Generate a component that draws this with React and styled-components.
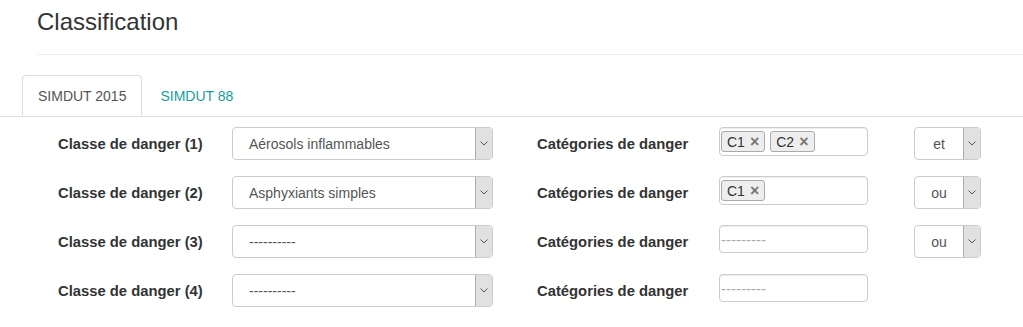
import React from "react";
import styled, { createGlobalStyle } from "styled-components";

const GlobalStyle = createGlobalStyle`
  body {
    margin: 0;
    background: #fff;
    font-family: "Liberation Sans", Arial, sans-serif;
    color: #333;
  }
`;

const rows = [
  { n: 1, value: "Aérosols inflammables", tags: ["C1", "C2"], op: "et" },
  { n: 2, value: "Asphyxiants simples", tags: ["C1"], op: "ou" },
  { n: 3, value: "----------", tags: [], op: "ou" },
  { n: 4, value: "----------", tags: [], op: null },
];

const Chevron = () => (
  <svg width="8" height="5" viewBox="0 0 8 5">
    <path d="M0.5 0.5 L4 4 L7.5 0.5" fill="none" stroke="#555" strokeWidth="1" />
  </svg>
);

const App = () => {
  return (
    <Page>
      <GlobalStyle />
      <Header>
        <Title>Classification</Title>
      </Header>
      <Tabs>
        <Tab active>SIMDUT 2015</Tab>
        <Tab>SIMDUT 88</Tab>
      </Tabs>
      <Form>
        {rows.map((row) => (
          <Row key={row.n}>
            <Label>Classe de danger ({row.n})</Label>
            <Select>
              <SelectValue>{row.value}</SelectValue>
              <Arrow>
                <Chevron />
              </Arrow>
            </Select>
            <Label>Catégories de danger</Label>
            <TagInput empty={row.tags.length === 0}>
              {row.tags.length > 0 ? (
                row.tags.map((t) => (
                  <Tag key={t}>
                    {t}
                    <Remove>×</Remove>
                  </Tag>
                ))
              ) : (
                <Placeholder>---------</Placeholder>
              )}
            </TagInput>
            {row.op ? (
              <SmallSelect>
                <SmallValue>{row.op}</SmallValue>
                <Arrow>
                  <Chevron />
                </Arrow>
              </SmallSelect>
            ) : (
              <span />
            )}
          </Row>
        ))}
      </Form>
    </Page>
  );
};

const Page = styled.div`
  width: 1023px;
  height: 327px;
  overflow: hidden;
`;

const Header = styled.div`
  margin-left: 37px;
  padding-top: 9px;
  padding-bottom: 19px;
  border-bottom: 1px solid #eee;
`;

const Title = styled.h3`
  margin: 0;
  font-size: 24px;
  font-weight: 400;
  line-height: 26px;
  color: #333;
`;

const Tabs = styled.div`
  display: flex;
  margin-top: 20px;
  padding-left: 22px;
  border-bottom: 1px solid #ddd;
  height: 41px;
`;

const Tab = styled.div`
  display: flex;
  align-items: center;
  padding: 0 15px;
  height: 41px;
  margin-bottom: -1px;
  font-size: 14px;
  color: ${(p) => (p.active ? "#555" : "#1a9c9c")};
  background: #fff;
  border: 1px solid ${(p) => (p.active ? "#ddd" : "transparent")};
  border-bottom-color: ${(p) => (p.active ? "#fff" : "transparent")};
  border-radius: 4px 4px 0 0;
  margin-right: 2px;
  box-sizing: border-box;
`;

const Form = styled.div`
  padding: 10px 0 0 58px;
  display: flex;
  flex-direction: column;
  gap: 16px;
`;

const Row = styled.div`
  display: grid;
  grid-template-columns: 174px 261px 44px 182px 149px 46px 67px;
  grid-template-areas: "l1 s1 . l2 t . o";
  align-items: center;
  height: 33px;

  & > :nth-child(1) { grid-area: l1; }
  & > :nth-child(2) { grid-area: s1; }
  & > :nth-child(3) { grid-area: l2; }
  & > :nth-child(4) { grid-area: t; }
  & > :nth-child(5) { grid-area: o; }
`;

const Label = styled.div`
  font-size: 14.8px;
  font-weight: 700;
  color: #333;
  white-space: nowrap;
`;

const Select = styled.div`
  display: flex;
  height: 33px;
  box-sizing: border-box;
  border: 1px solid #ccc;
  border-radius: 4px;
  overflow: hidden;
  background: #fff;
`;

const SelectValue = styled.div`
  flex: 1;
  display: flex;
  align-items: center;
  padding-left: 16px;
  font-size: 14px;
  color: #555;
`;

const SmallSelect = styled(Select)``;

const SmallValue = styled.div`
  flex: 1;
  display: flex;
  align-items: center;
  justify-content: center;
  font-size: 14px;
  color: #555;
`;

const Arrow = styled.div`
  width: 16px;
  display: flex;
  align-items: center;
  justify-content: center;
  background: #e1e1e1;
  border-left: 1px solid #adadad;
`;

const TagInput = styled.div`
  align-self: start;
  height: ${(p) => (p.empty ? "28px" : "29px")};
  box-sizing: border-box;
  border: 1px solid #ccc;
  border-radius: 4px;
  display: flex;
  align-items: ${(p) => (p.empty ? "center" : "flex-start")};
  gap: 5px;
  padding: 3px 1px;
  box-shadow: inset 0 1px 1px rgba(0, 0, 0, 0.075);
`;

const Tag = styled.span`
  display: inline-flex;
  align-items: center;
  gap: 5px;
  height: 21px;
  box-sizing: border-box;
  padding: 0 5px;
  background: #eee;
  border: 1px solid #aaa;
  border-radius: 3px;
  font-size: 14px;
  color: #333;
`;

const Remove = styled.span`
  font-size: 16px;
  font-weight: 700;
  color: #777;
`;

const Placeholder = styled.span`
  font-size: 15px;
  color: #aaa;
`;

export default App;
